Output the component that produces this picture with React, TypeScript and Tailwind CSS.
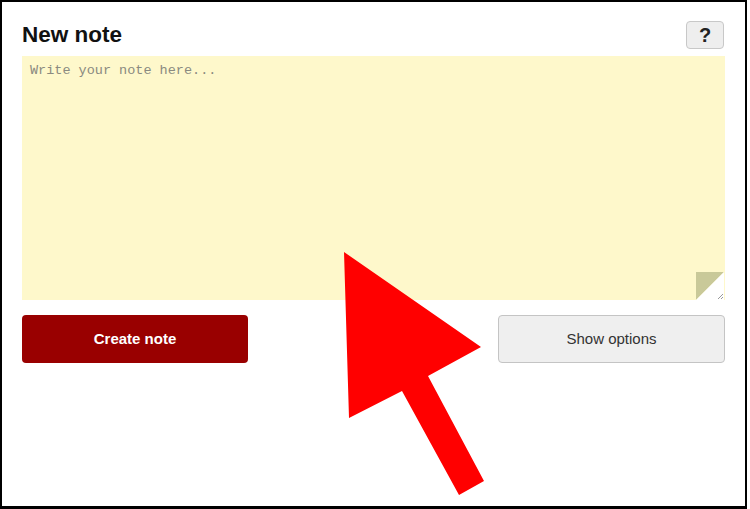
export default function App() {
  return (
    <div className="relative w-[750px] h-[509px] bg-white" style={{ fontFamily: '"Liberation Sans", Arial, sans-serif' }}>
      <div className="w-[747px] h-[509px] border-2 border-b-[3px] border-black px-5 pt-[19px]">
        {/* Header */}
        <div className="flex items-center justify-between h-7">
          <h1 className="text-[22.5px] font-bold text-[#111] leading-none">New note</h1>
          <button className="w-[38px] h-7 mr-px rounded-[4px] border border-[#c8c8c8] bg-[#eeeeee] text-[20px] font-bold text-[#222] leading-none flex items-center justify-center">
            ?
          </button>
        </div>

        {/* Note area */}
        <div className="relative mt-[7px] h-[244px]">
          <textarea
            className="block w-full h-full bg-[#fef8cb] px-2 py-[7px] text-[13.5px] leading-[16px] text-[#333] outline-none placeholder:text-[#8a8a80]"
            style={{ fontFamily: '"Liberation Mono", "Courier New", monospace' }}
            placeholder="Write your note here..."
          />
          <svg className="absolute right-px bottom-0 pointer-events-none" width="28" height="28" viewBox="0 0 28 28">
            <polygon points="0,0 28,0 0,28" fill="#c9c999" />
            <polygon points="28,0 28,28 0,28" fill="#ffffff" />
            <line x1="22" y1="27" x2="27" y2="22" stroke="#999" strokeWidth="1" />
            <line x1="25" y1="27" x2="27" y2="25" stroke="#999" strokeWidth="1" />
          </svg>
        </div>

        {/* Actions */}
        <div className="mt-[15px] flex justify-between">
          <button className="w-[226px] h-12 rounded-[4px] bg-[#990000] text-white text-[15px] font-bold">
            Create note
          </button>
          <button className="w-[227px] h-12 rounded-[4px] border border-[#c4c4c4] bg-[#efefef] text-[#333] text-[15px]">
            Show options
          </button>
        </div>
      </div>

      {/* Red pointer arrow */}
      <svg className="absolute top-0 left-0 pointer-events-none" width="750" height="509" viewBox="0 0 750 509">
        <polygon
          points="344,252 481,347 428,376 484,481 459,495 402,391 349,418"
          fill="#ff0000"
        />
      </svg>
    </div>
  );
}
